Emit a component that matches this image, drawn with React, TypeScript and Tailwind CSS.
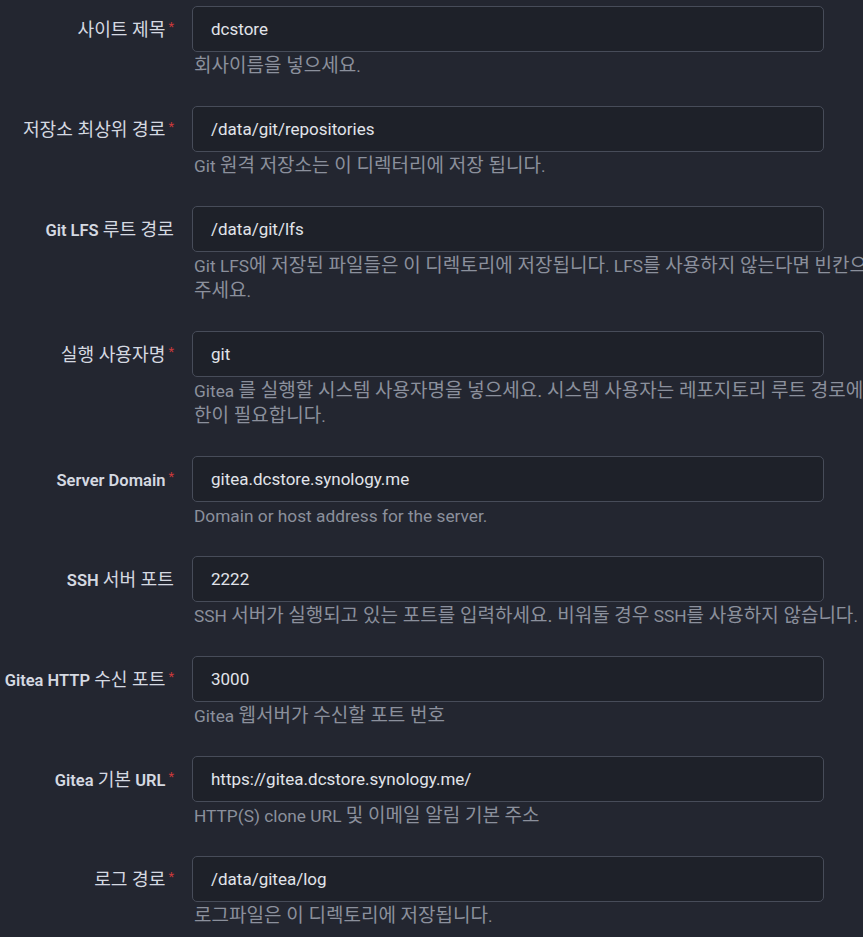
import React from "react";

type Seg = { t: string; b?: boolean };
type Row = {
  label: Seg[];
  required: boolean;
  value: string;
  help: string[];
};

const rows: Row[] = [
  { label: [{ t: "사이트 제목" }], required: true, value: "dcstore", help: ["회사이름을 넣으세요."] },
  {
    label: [{ t: "저장소 최상위 경로" }],
    required: true,
    value: "/data/git/repositories",
    help: ["Git 원격 저장소는 이 디렉터리에 저장 됩니다."],
  },
  {
    label: [{ t: "Git LFS", b: true }, { t: " 루트 경로" }],
    required: false,
    value: "/data/git/lfs",
    help: [
      "Git LFS에 저장된 파일들은 이 디렉토리에 저장됩니다. LFS를 사용하지 않는다면 빈칸으로 남겨",
      "주세요.",
    ],
  },
  {
    label: [{ t: "실행 사용자명" }],
    required: true,
    value: "git",
    help: [
      "Gitea 를 실행할 시스템 사용자명을 넣으세요. 시스템 사용자는 레포지토리 루트 경로에 접근 권",
      "한이 필요합니다.",
    ],
  },
  {
    label: [{ t: "Server Domain", b: true }],
    required: true,
    value: "gitea.dcstore.synology.me",
    help: ["Domain or host address for the server."],
  },
  {
    label: [{ t: "SSH", b: true }, { t: " 서버 포트" }],
    required: false,
    value: "2222",
    help: ["SSH 서버가 실행되고 있는 포트를 입력하세요. 비워둘 경우 SSH를 사용하지 않습니다."],
  },
  {
    label: [{ t: "Gitea HTTP", b: true }, { t: " 수신 포트" }],
    required: true,
    value: "3000",
    help: ["Gitea 웹서버가 수신할 포트 번호"],
  },
  {
    label: [{ t: "Gitea", b: true }, { t: " 기본 " }, { t: "URL", b: true }],
    required: true,
    value: "https://gitea.dcstore.synology.me/",
    help: ["HTTP(S) clone URL 및 이메일 알림 기본 주소"],
  },
  {
    label: [{ t: "로그 경로" }],
    required: true,
    value: "/data/gitea/log",
    help: ["로그파일은 이 디렉토리에 저장됩니다."],
  },
];

const font = { fontFamily: 'Roboto, "Noto Sans CJK KR", "Noto Sans CJK JP", sans-serif' };

const HANGUL = /([\u3131-\u318E\uAC00-\uD7A3]+(?:[ .]+[\u3131-\u318E\uAC00-\uD7A3]+)*)/;

function Ko({ text }: { text: string }) {
  const parts = text.split(HANGUL);
  return (
    <>
      {parts.map((p, i) =>
        i % 2 === 1 ? (
          <span key={i} className="text-[1.1em] leading-none">
            {p}
          </span>
        ) : (
          <React.Fragment key={i}>{p}</React.Fragment>
        )
      )}
    </>
  );
}

export default function App() {
  return (
    <div className="w-[863px] h-[937px] overflow-hidden bg-[#232630] pt-[6px]" style={font}>
      {rows.map((r, i) => (
        <div key={i} className="flex items-start mb-[27px]">
          <div className="h-[36px] w-[192px] shrink-0 pr-[18px] pt-[14px] text-right text-[16.5px] leading-[22px] text-[#d5d9e1] whitespace-nowrap">
            {r.label.map((s, j) => (
              <span key={j} className={s.b ? "font-semibold" : "font-normal"}>
                <Ko text={s.t} />
              </span>
            ))}
            {r.required && (
              <span className="relative -top-[5px] ml-[3px] text-[13px] text-[#c9393b]">*</span>
            )}
          </div>
          <div className="w-[632px] shrink-0">
            <div className="flex h-[46px] items-center rounded-[5px] border border-[#474c59] bg-[#1e2129] pl-[18px] pt-[2px] text-[17px] text-[#e1e4ea]">
              {r.value}
            </div>
            <div className="pl-[2px] pt-[2px] text-[17.3px] leading-[25px] text-[#8b909c] whitespace-nowrap">
              {r.help.map((h, j) => (
                <div key={j} className="h-[25px]">
                  <Ko text={h} />
                </div>
              ))}
            </div>
          </div>
        </div>
      ))}
    </div>
  );
}
